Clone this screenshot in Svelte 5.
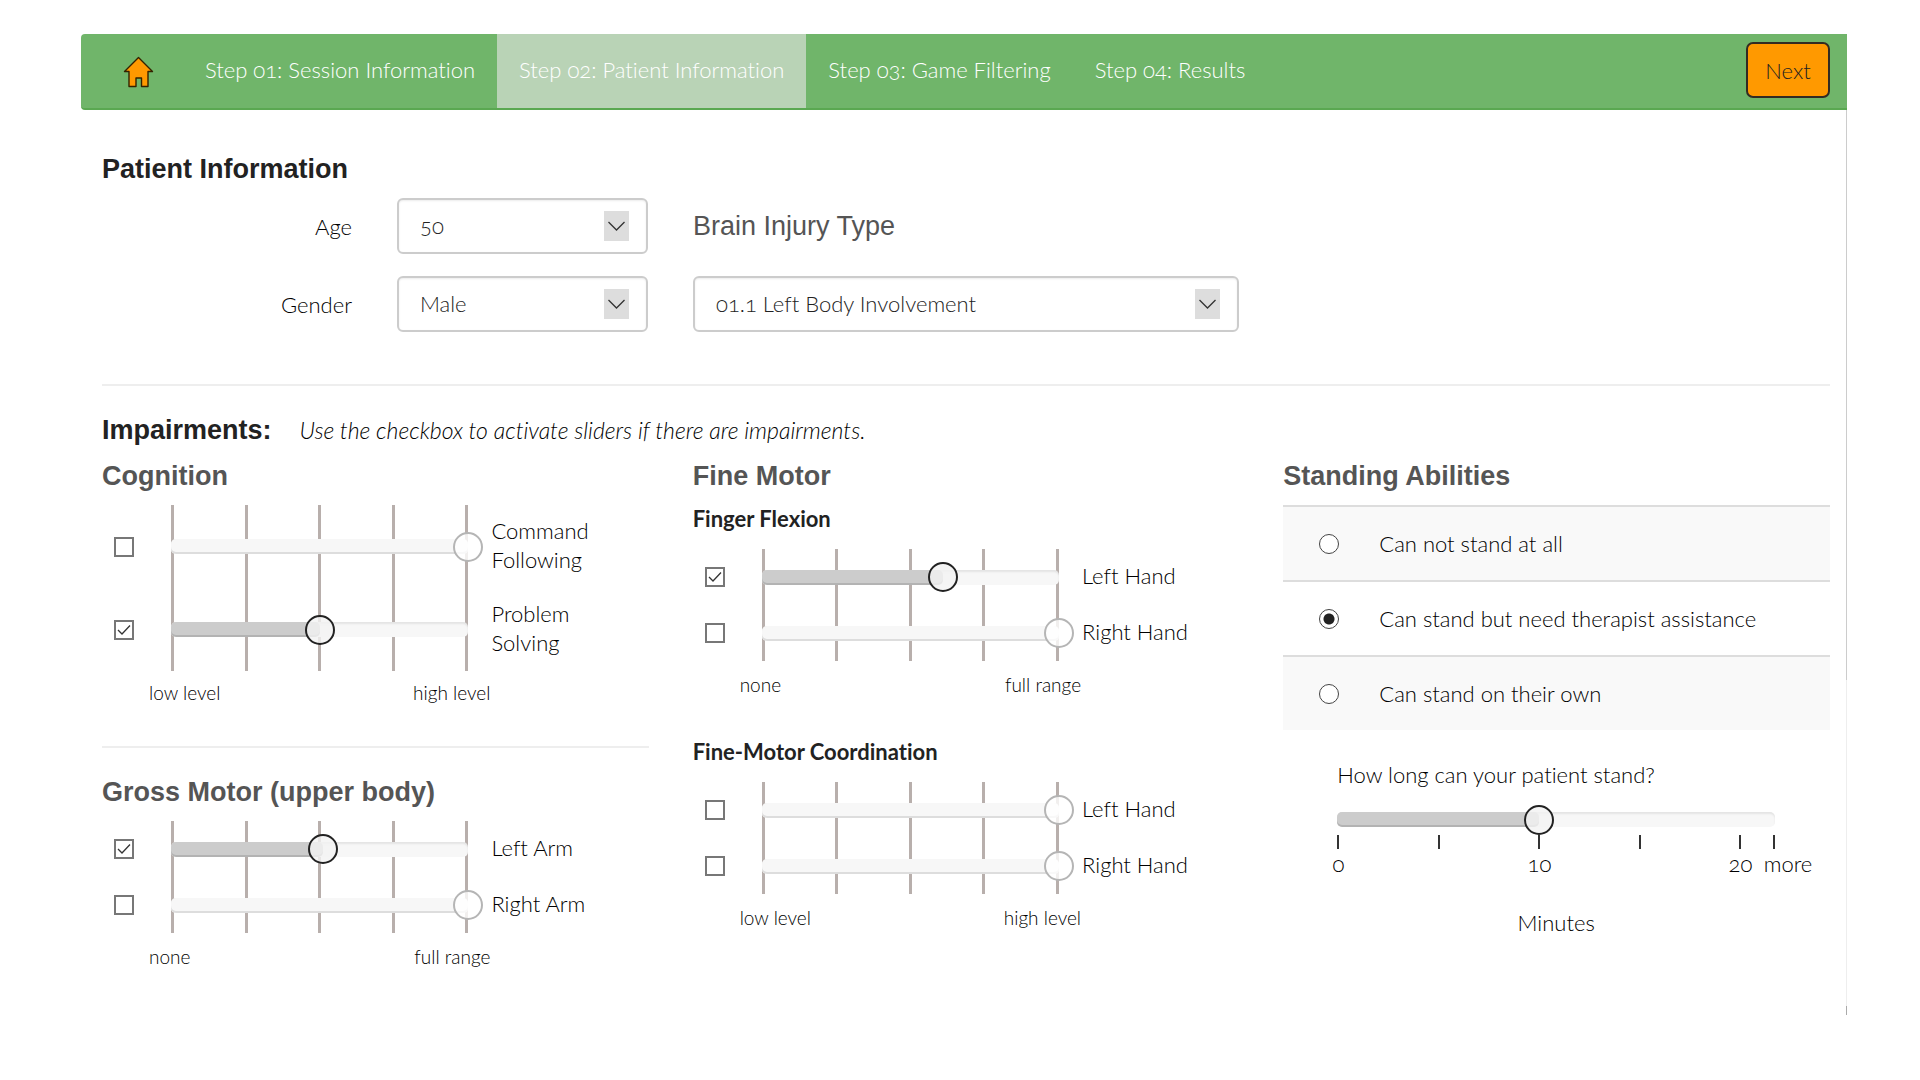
<script>
  const steps = [
    'Step 01: Session Information',
    'Step 02: Patient Information',
    'Step 03: Game Filtering',
    'Step 04: Results',
  ];
  const currentStep = 1;

  let age = $state('50');
  let gender = $state('Male');
  let injury = $state('01.1 Left Body Involvement');

  let cognition = $state([
    { id: 'command', label: 'Command Following', on: false, value: 100 },
    { id: 'problem', label: 'Problem Solving', on: true, value: 50 },
  ]);
  let gross = $state([
    { id: 'left-arm', label: 'Left Arm', on: true, value: 51 },
    { id: 'right-arm', label: 'Right Arm', on: false, value: 100 },
  ]);
  let flexion = $state([
    { id: 'flex-left', label: 'Left Hand', on: true, value: 61 },
    { id: 'flex-right', label: 'Right Hand', on: false, value: 100 },
  ]);
  let coordination = $state([
    { id: 'coord-left', label: 'Left Hand', on: false, value: 100 },
    { id: 'coord-right', label: 'Right Hand', on: false, value: 100 },
  ]);

  const abilities = [
    'Can not stand at all',
    'Can stand but need therapist assistance',
    'Can stand on their own',
  ];
  let ability = $state(abilities[1]);

  let standing = $state({ value: 46 });
  const ticks = ['0', '', '10', '', '20', 'more'];
</script>

{#snippet dropArrow()}
  <svg class="drop" viewBox="0 0 25 30" aria-hidden="true">
    <rect width="25" height="30" fill="#ddd" />
    <path d="M4.500 11 L12.500 19 L20.500 11" fill="none" stroke="#333" stroke-width="1.300" />
  </svg>
{/snippet}

{#snippet slider(item, enabled, label)}
  <div class="slider" class:off={!enabled}>
    <div class="track"></div>
    <div class="fill" style:width="{item.value}%"></div>
    <input type="range" min="0" max="100" bind:value={item.value} disabled={!enabled} aria-label={label} />
  </div>
{/snippet}

{#snippet sliderGroup(items, low, high, tall)}
  <div class="group" class:tall>
    <div class="lines" aria-hidden="true">
      {#each { length: 5 } as _}<span></span>{/each}
    </div>
    {#each items as item, i}
      <div class="check" class:second={i === 1}>
        <input type="checkbox" id={item.id} bind:checked={item.on} />
        {#if item.on}
          <svg viewBox="0 0 20 20" aria-hidden="true">
            <path d="M4 10 L8 14 L16 5.500" fill="none" stroke="#333" stroke-width="1.300" />
          </svg>
        {/if}
      </div>
      <div class="bar" class:second={i === 1}>{@render slider(item, item.on, item.label)}</div>
      <label class="name" class:second={i === 1} for={item.id}>{item.label}</label>
    {/each}
    <div class="ends"><span>{low}</span><span>{high}</span></div>
  </div>
{/snippet}

<div class="page">
  <header>
    <a class="home" href="#home" aria-label="Home">
      <svg viewBox="0 0 31 32" aria-hidden="true">
        <path
          d="M15.500 1.500 L29.500 15.500 H25 V30.500 H18.500 V22 H13 V30.500 H6 V15.500 H1.500 Z"
          fill="#f90"
          stroke="#332200"
          stroke-width="1.400"
          stroke-linejoin="round"
        />
      </svg>
    </a>
    <nav>
      {#each steps as step, i}
        <a href="#step-{i + 1}" class:current={i === currentStep}>{step}</a>
      {/each}
    </nav>
    <button type="button" class="next">Next</button>
  </header>

  <main>
    <h1>Patient Information</h1>
    <div class="form">
      <label for="age">Age</label>
      <div class="select">
        <select id="age" bind:value={age}><option>50</option><option>51</option></select>
        {@render dropArrow()}
      </div>
      <label class="injury-title" for="injury">Brain Injury Type</label>
      <label for="gender">Gender</label>
      <div class="select">
        <select id="gender" bind:value={gender}><option>Male</option><option>Female</option></select>
        {@render dropArrow()}
      </div>
      <div class="select injury">
        <select id="injury" bind:value={injury}><option>01.1 Left Body Involvement</option></select>
        {@render dropArrow()}
      </div>
    </div>

    <hr class="wide" />

    <div class="intro">
      <h1>Impairments:</h1>
      <p>Use the checkbox to activate sliders if there are impairments.</p>
    </div>

    <div class="columns">
      <section>
        <h2>Cognition</h2>
        {@render sliderGroup(cognition, 'low level', 'high level', true)}
        <hr />
        <h2>Gross Motor (upper body)</h2>
        {@render sliderGroup(gross, 'none', 'full range', false)}
      </section>

      <section>
        <h2>Fine Motor</h2>
        <h3>Finger Flexion</h3>
        {@render sliderGroup(flexion, 'none', 'full range', false)}
        <h3 class="later">Fine-Motor Coordination</h3>
        {@render sliderGroup(coordination, 'low level', 'high level', false)}
      </section>

      <section>
        <h2>Standing Abilities</h2>
        <div class="abilities" role="radiogroup" aria-label="Standing Abilities">
          {#each abilities as option}
            <label>
              <input type="radio" name="ability" value={option} bind:group={ability} />
              {option}
            </label>
          {/each}
        </div>
        <div class="duration">
          <p>How long can your patient stand?</p>
          {@render slider(standing, true, 'How long can your patient stand?')}
          <div class="ticks">
            {#each ticks as tick}
              <div class="tick" class:more={tick === 'more'}><i></i><span>{tick}</span></div>
            {/each}
          </div>
          <p class="unit">Minutes</p>
        </div>
      </section>
    </div>
  </main>
</div>

<style>
  :global(body) {
    margin: 0;
    background: #fff;
  }
  .page {
    box-sizing: border-box;
    padding: 34px 73px 0 81px;
    font-family: Lato, 'Open Sans', sans-serif;
    font-size: 22px;
    font-weight: 300;
    font-variant-numeric: oldstyle-nums;
    font-variant-ligatures: none;
    line-height: 29px;
    color: #000;
  }
  .page * {
    box-sizing: border-box;
  }
  h1,
  h2,
  h3,
  p {
    margin: 0;
  }
  h1,
  h2 {
    font-family: 'Liberation Sans', Arial, sans-serif;
    font-size: 27px;
    line-height: 32px;
    font-weight: 700;
    color: #222;
  }
  h2 {
    color: #555;
  }
  h3 {
    font-size: 22px;
    font-weight: 700;
    color: #222;
    margin: 12px 0 16px;
  }
  h3.later {
    margin-top: 40px;
  }
  hr {
    height: 2px;
    border: 0;
    background: #eee;
    margin: 41px 0 28px;
  }
  hr.wide {
    margin: 52px 0 28px;
  }

  header {
    display: flex;
    align-items: stretch;
    height: 76px;
    background: #70b56a;
    border-bottom: 2px solid #5aa851;
    border-radius: 4px 0 0 4px;
  }
  .home {
    display: flex;
    align-items: center;
    width: 102px;
    padding: 2px 0 0 42px;
  }
  .home svg {
    width: 31px;
    height: 32px;
  }
  nav {
    display: flex;
    flex: 1;
  }
  nav a {
    display: flex;
    align-items: center;
    padding: 0 22px 4px;
    color: #fff;
    text-decoration: none;
    white-space: nowrap;
  }
  nav a.current {
    background: #b9d3b6;
  }
  .next {
    align-self: center;
    width: 84px;
    height: 56px;
    margin: 0 17px 2px 0;
    padding: 0;
    font: inherit;
    color: #222;
    background: #f90;
    border: 2px solid #332b22;
    border-radius: 7px;
  }

  main {
    padding: 43px 17px 46px 21px;
    background: linear-gradient(#ccc 63%, #eee 63%, #eee 99%, #aaa 99%) right / 1px 100% no-repeat;
  }
  .form {
    display: grid;
    grid-template-columns: 250px 251px minmax(0, 546px);
    grid-auto-rows: 56px;
    gap: 22px 45px;
    align-items: center;
    margin-top: 13px;
  }
  .form label {
    text-align: right;
  }
  .form label.injury-title {
    font-family: 'Liberation Sans', Arial, sans-serif;
    font-size: 27px;
    font-weight: 400;
    line-height: 32px;
    text-align: left;
    color: #555;
  }
  .select {
    display: grid;
    align-items: center;
  }
  .select select,
  .select .drop {
    grid-area: 1 / 1;
  }
  .select .drop {
    justify-self: end;
    width: 25px;
    height: 30px;
    margin-right: 19px;
    pointer-events: none;
  }
  select {
    width: 100%;
    height: 56px;
    padding: 0 60px 2px 21px;
    appearance: none;
    font: inherit;
    color: #222;
    background: #fff;
    border: 2px solid #ccc;
    border-radius: 6px;
    box-shadow: inset 0 1px 2px rgba(0, 0, 0, 0.08);
  }

  .intro {
    display: flex;
    align-items: baseline;
    gap: 28px;
    margin-bottom: 14px;
  }
  .intro p {
    font-size: 23px;
    font-style: italic;
  }
  .columns {
    display: grid;
    grid-template-columns: repeat(3, minmax(0, 1fr));
    gap: 44px;
  }

  .group {
    display: grid;
    grid-template-columns: 69px 297fr 180fr;
    grid-template-rows: 56px 56px auto;
    align-items: center;
  }
  .group.tall {
    grid-template-rows: 83px 83px auto;
  }
  h2 + .group {
    margin-top: 13px;
  }
  .lines {
    grid-area: 1 / 2 / 3 / 3;
    align-self: stretch;
    display: flex;
    justify-content: space-between;
  }
  .lines span {
    width: 3px;
    background: #b8afac;
  }
  .check {
    grid-area: 1 / 1;
    display: grid;
    justify-content: start;
    padding-left: 12px;
  }
  .check > * {
    grid-area: 1 / 1;
    width: 20px;
    height: 20px;
  }
  .check svg {
    pointer-events: none;
  }
  .bar {
    grid-area: 1 / 2;
  }
  .name {
    grid-area: 1 / 3;
    width: 145px;
    padding: 0 0 3px 23px;
  }
  .second {
    grid-row: 2;
  }
  .ends {
    grid-area: 3 / 2;
    display: flex;
    justify-content: space-between;
    margin: 12px -22px 0;
    font-size: 19px;
    line-height: 24px;
  }
  .tall .ends {
    margin-top: 10px;
  }
  input[type='checkbox'],
  input[type='radio'] {
    appearance: none;
    flex: none;
    width: 20px;
    height: 20px;
    margin: 0;
    background: #fff;
    border: 2px solid #777;
  }
  input[type='radio'] {
    border-width: 1px;
    border-color: #444;
    border-radius: 50%;
  }
  input[type='radio']:checked {
    background: radial-gradient(circle, #222 5px, #fff 6px);
  }

  .slider {
    display: grid;
    align-items: center;
  }
  .slider > * {
    grid-area: 1 / 1;
  }
  .track,
  .fill {
    height: 15px;
    border-radius: 5px;
  }
  .track {
    background: #f7f7f7;
    box-shadow: inset 0 2px 2px rgba(0, 0, 0, 0.08);
  }
  .fill {
    background: #ccc;
    box-shadow: inset 0 -2px 0 rgba(0, 0, 0, 0.12);
  }
  .off .fill {
    background: #f7f7f7;
    box-shadow: inset 0 -2px 0 #ddd;
  }
  input[type='range'] {
    appearance: none;
    min-width: 0;
    height: 15px;
    margin: 0 -15px;
    background: transparent;
  }
  input[type='range']::-webkit-slider-thumb {
    appearance: none;
    width: 30px;
    height: 30px;
    background: rgba(243, 243, 243, 0.8);
    border: 2px solid #222;
    border-radius: 50%;
  }
  .off input[type='range']::-webkit-slider-thumb {
    background: rgba(255, 255, 255, 0.8);
    border-color: #b5b5b5;
  }

  .abilities {
    margin-top: 13px;
  }
  .abilities label {
    display: flex;
    align-items: center;
    gap: 40px;
    min-height: 75px;
    padding-left: 36px;
    border-top: 2px solid #ddd;
  }
  .abilities label:nth-child(odd) {
    background: #f9f9f9;
  }
  .duration {
    padding: 30px 55px 0 54px;
  }
  .duration .slider {
    margin-top: 23px;
  }
  .ticks {
    display: grid;
    grid-template-columns: 3fr 3fr 3fr 3fr 1fr 0;
    margin: 8px 1px 0;
  }
  .tick {
    display: flex;
    flex-direction: column;
    align-items: center;
    width: 0;
  }
  .tick i {
    width: 2px;
    height: 14px;
    background: #333;
  }
  .tick.more span {
    margin-left: 28px;
  }
  .duration .unit {
    margin-top: 30px;
    text-align: center;
  }
</style>
